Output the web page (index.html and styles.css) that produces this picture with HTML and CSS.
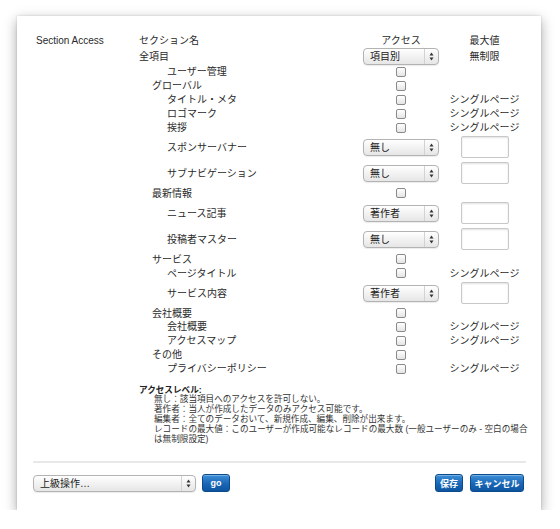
FILE: index.html
```html
<!DOCTYPE html>
<html lang="ja">
<head>
<meta charset="utf-8">
<title>Section Access</title>
<link rel="stylesheet" href="styles.css">
</head>
<body>
<div class="panel">
  <div class="main">
    <div class="label">Section Access</div>
    <div class="content">
      <div class="row head"><div class="name">セクション名</div><div class="acc">アクセス</div><div class="max">最大値</div></div>
      <div class="row top"><div class="name">全項目</div><div class="acc"><span class="select"><span class="val">項目別</span><span class="arr"><svg width="5" height="9" viewBox="0 0 5 9"><polygon points="0.5,3.5 2.5,0.5 4.5,3.5" fill="#333"/><polygon points="0.5,5.5 2.5,8.5 4.5,5.5" fill="#333"/></svg></span></span></div><div class="max">無制限</div></div>
      <div class="row t"><div class="name l2">ユーザー管理</div><div class="acc"><span class="cb"></span></div><div class="max"></div></div>
      <div class="row t"><div class="name l1">グローバル</div><div class="acc"><span class="cb"></span></div><div class="max"></div></div>
      <div class="row t"><div class="name l2">タイトル・メタ</div><div class="acc"><span class="cb"></span></div><div class="max">シングルページ</div></div>
      <div class="row t"><div class="name l2">ロゴマーク</div><div class="acc"><span class="cb"></span></div><div class="max">シングルページ</div></div>
      <div class="row t"><div class="name l2">挨拶</div><div class="acc"><span class="cb"></span></div><div class="max">シングルページ</div></div>
      <div class="row i"><div class="name l2">スポンサーバナー</div><div class="acc"><span class="select"><span class="val">無し</span><span class="arr"><svg width="5" height="9" viewBox="0 0 5 9"><polygon points="0.5,3.5 2.5,0.5 4.5,3.5" fill="#333"/><polygon points="0.5,5.5 2.5,8.5 4.5,5.5" fill="#333"/></svg></span></span></div><div class="max"><span class="txt"></span></div></div>
      <div class="row i"><div class="name l2">サブナビゲーション</div><div class="acc"><span class="select"><span class="val">無し</span><span class="arr"><svg width="5" height="9" viewBox="0 0 5 9"><polygon points="0.5,3.5 2.5,0.5 4.5,3.5" fill="#333"/><polygon points="0.5,5.5 2.5,8.5 4.5,5.5" fill="#333"/></svg></span></span></div><div class="max"><span class="txt"></span></div></div>
      <div class="row t"><div class="name l1">最新情報</div><div class="acc"><span class="cb"></span></div><div class="max"></div></div>
      <div class="row i"><div class="name l2">ニュース記事</div><div class="acc"><span class="select"><span class="val">著作者</span><span class="arr"><svg width="5" height="9" viewBox="0 0 5 9"><polygon points="0.5,3.5 2.5,0.5 4.5,3.5" fill="#333"/><polygon points="0.5,5.5 2.5,8.5 4.5,5.5" fill="#333"/></svg></span></span></div><div class="max"><span class="txt"></span></div></div>
      <div class="row i"><div class="name l2">投稿者マスター</div><div class="acc"><span class="select"><span class="val">無し</span><span class="arr"><svg width="5" height="9" viewBox="0 0 5 9"><polygon points="0.5,3.5 2.5,0.5 4.5,3.5" fill="#333"/><polygon points="0.5,5.5 2.5,8.5 4.5,5.5" fill="#333"/></svg></span></span></div><div class="max"><span class="txt"></span></div></div>
      <div class="row t"><div class="name l1">サービス</div><div class="acc"><span class="cb"></span></div><div class="max"></div></div>
      <div class="row t"><div class="name l2">ページタイトル</div><div class="acc"><span class="cb"></span></div><div class="max">シングルページ</div></div>
      <div class="row i"><div class="name l2">サービス内容</div><div class="acc"><span class="select"><span class="val">著作者</span><span class="arr"><svg width="5" height="9" viewBox="0 0 5 9"><polygon points="0.5,3.5 2.5,0.5 4.5,3.5" fill="#333"/><polygon points="0.5,5.5 2.5,8.5 4.5,5.5" fill="#333"/></svg></span></span></div><div class="max"><span class="txt"></span></div></div>
      <div class="row t"><div class="name l1">会社概要</div><div class="acc"><span class="cb"></span></div><div class="max"></div></div>
      <div class="row t"><div class="name l2">会社概要</div><div class="acc"><span class="cb"></span></div><div class="max">シングルページ</div></div>
      <div class="row t"><div class="name l2">アクセスマップ</div><div class="acc"><span class="cb"></span></div><div class="max">シングルページ</div></div>
      <div class="row t"><div class="name l1">その他</div><div class="acc"><span class="cb"></span></div><div class="max"></div></div>
      <div class="row t"><div class="name l2">プライバシーポリシー</div><div class="acc"><span class="cb"></span></div><div class="max">シングルページ</div></div>

      <div class="legend">
        <div class="legend-title">アクセスレベル:</div>
        <div class="legend-body">
          <div>無し：該当項目へのアクセスを許可しない。</div>
          <div>著作者：当人が作成したデータのみアクセス可能です。</div>
          <div>編集者：全てのデータおいて、新規作成、編集、削除が出来ます。</div>
          <div>レコードの最大値：このユーザーが作成可能なレコードの最大数 (一般ユーザーのみ - 空白の場合<br>は無制限設定)</div>
        </div>
      </div>
    </div>
  </div>
  <div class="footer">
    <div class="footer-left">
      <span class="select wide"><span class="val">上級操作…</span><span class="arr"><svg width="5" height="9" viewBox="0 0 5 9"><polygon points="0.5,3.5 2.5,0.5 4.5,3.5" fill="#333"/><polygon points="0.5,5.5 2.5,8.5 4.5,5.5" fill="#333"/></svg></span></span>
      <span class="btn go">go</span>
    </div>
    <div class="footer-right">
      <span class="btn save">保存</span>
      <span class="btn cancel">キャンセル</span>
    </div>
  </div>
</div>
</body>
</html>
```

FILE: styles.css
```css
html, body {
  margin: 0;
  padding: 0;
  background: #ffffff;
}
body {
  font-family: "Liberation Sans", "Noto Sans CJK JP", sans-serif;
  font-size: 10px;
  color: #2a2a2a;
  padding: 16px 0 0 17px;
}
.panel {
  width: 524px;
  height: 494px;
  box-sizing: border-box;
  background: #fff;
  box-shadow: 0 4px 12px rgba(0, 0, 0, 0.35), 0 0 2px rgba(0, 0, 0, 0.15);
  display: flex;
  flex-direction: column;
  padding: 18px 15px 18px 16px;
}
.main {
  display: flex;
}
.label {
  width: 103px;
  padding-left: 3px;
  line-height: 13px;
  flex: none;
}
.content {
  flex: 1;
}
.row {
  display: grid;
  grid-template-columns: 224px 76px 91px;
  align-items: center;
}
.row.head { height: 13px; }
.row.top { height: 18px; }
.row.t { height: 13.9px; }
.row.i { height: 26px; }
.name { white-space: nowrap; line-height: 13px; }
.name.l1 { padding-left: 13px; }
.name.l2 { padding-left: 28px; }
.acc, .max {
  display: flex;
  justify-content: center;
  align-items: center;
  white-space: nowrap;
  line-height: 13px;
}
.cb {
  width: 10px;
  height: 10px;
  box-sizing: border-box;
  border: 1px solid #8a8a8a;
  border-radius: 2px;
  background: linear-gradient(#ffffff, #e4e4e4);
}
.select {
  display: flex;
  width: 76px;
  height: 17px;
  box-sizing: border-box;
  border: 1px solid #b3b3b3;
  border-radius: 4px;
  background: linear-gradient(#ffffff, #f2f2f2 50%, #e6e6e6);
  box-shadow: 0 1px 1px rgba(0, 0, 0, 0.08);
  align-items: center;
}
.select .val {
  flex: 1;
  padding-left: 6px;
  line-height: 15px;
  color: #222;
}
.select .arr {
  width: 13px;
  height: 15px;
  border-left: 1px solid #d2d2d2;
  display: flex;
  align-items: center;
  justify-content: center;
}
.select.wide {
  width: 163px;
}
.txt {
  display: block;
  width: 48px;
  height: 22px;
  box-sizing: border-box;
  border: 1px solid #c8c8c8;
  border-radius: 2px;
  background: #fff;
  box-shadow: inset 0 1px 2px rgba(0, 0, 0, 0.12);
}
.legend {
  margin-top: 10px;
  font-size: 8.6px;
  line-height: 9.8px;
  color: #333;
  width: 395px;
}
.legend-title {
  font-weight: bold;
  color: #222;
}
.legend-body {
  padding-left: 15px;
  white-space: nowrap;
}
.footer {
  margin-top: auto;
  border-top: 2px solid #e8e8e8;
  padding-top: 11px;
  display: flex;
  justify-content: space-between;
  align-items: center;
}
.footer-left, .footer-right {
  display: flex;
  align-items: center;
  gap: 7px;
}
.footer-left { gap: 6px; }
.footer-right { padding-right: 2px; }
.btn {
  display: flex;
  align-items: center;
  justify-content: center;
  height: 18px;
  box-sizing: border-box;
  border: 1px solid #0b4a8c;
  border-radius: 3px;
  background: linear-gradient(#3d8fd8, #1a66b5 55%, #0c54a0);
  box-shadow: inset 0 1px 0 rgba(255, 255, 255, 0.3);
  color: #fff;
  font-weight: bold;
  font-size: 9px;
}
.btn.go { width: 28px; }
.btn.save { width: 28px; }
.btn.cancel { width: 54px; }
```
